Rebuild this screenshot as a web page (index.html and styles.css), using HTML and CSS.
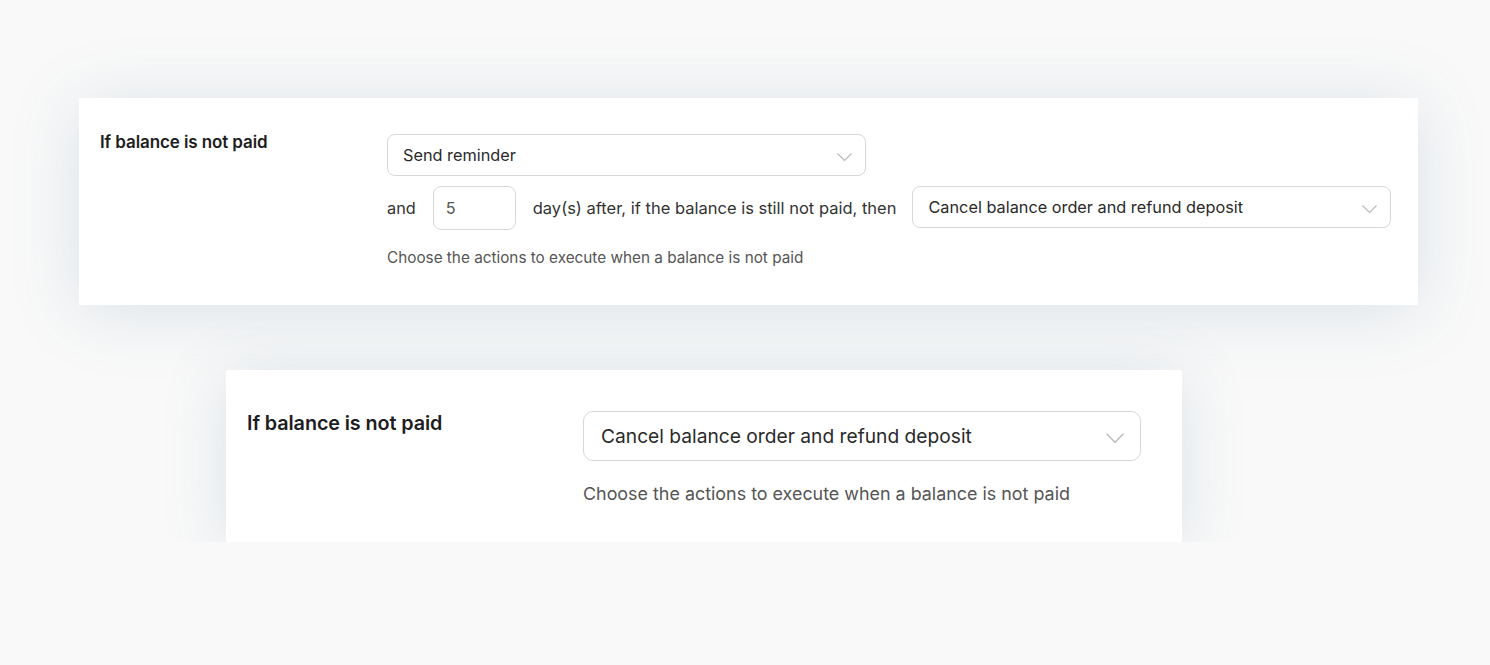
FILE: index.html
```html
<!DOCTYPE html>
<html lang="en">
<head>
    <meta charset="UTF-8">
    <meta name="viewport" content="width=device-width, initial-scale=1.0">
    <title>Balance settings</title>
    <link rel="stylesheet" href="styles.css">
</head>
<body>
    <div class="card card-wide">
        <div class="field-label">If balance is not paid</div>
        <div class="field-body">
            <div class="select select-first">
                <span>Send reminder</span>
                <svg class="chevron" viewBox="0 0 16 10"><path d="M1 1.5 L8 8.5 L15 1.5"/></svg>
            </div>
            <div class="inline-row">
                <span>and</span>
                <div class="number-box">5</div>
                <span class="row-text">day(s) after, if the balance is still not paid, then</span>
                <div class="select">
                    <span>Cancel balance order and refund deposit</span>
                    <svg class="chevron" viewBox="0 0 16 10"><path d="M1 1.5 L8 8.5 L15 1.5"/></svg>
                </div>
            </div>
            <p class="help">Choose the actions to execute when a balance is not paid</p>
        </div>
    </div>

    <div class="card card-large">
        <div class="field-label">If balance is not paid</div>
        <div class="field-body">
            <div class="select">
                <span>Cancel balance order and refund deposit</span>
                <svg class="chevron" viewBox="0 0 16 10"><path d="M1 1.5 L8 8.5 L15 1.5"/></svg>
            </div>
            <p class="help">Choose the actions to execute when a balance is not paid</p>
        </div>
    </div>
</body>
</html>
```

FILE: styles.css
```css
body {
    font-family: Inter, "Noto Sans", sans-serif;
    background-color: #f9f9f9;
    color: #1d1d1f;
    margin: 0;
    padding: 98px 0 0 79px;
}
.card {
    background-color: #fff;
    display: grid;
    box-shadow: 0 6px 64px rgba(70, 115, 150, 0.17);
    box-sizing: border-box;
}
.card-wide {
    width: 1339px;
    height: 207px;
    grid-template-columns: 287px 1fr;
    padding: 36px 28px 0 21px;
    font-size: 16.3px;
}
.card-large {
    width: 956px;
    height: 172px;
    margin: 65px 0 0 147px;
    grid-template-columns: 336px 1fr;
    padding: 41px 41px 0 21px;
    font-size: 19px;
}
.field-label {
    font-weight: 600;
    letter-spacing: -0.1px;
}
.card-wide .field-label {
    font-size: 17px;
    line-height: 17px;
}
.card-large .field-label {
    font-size: 19.8px;
    line-height: 24px;
}
.field-body {
    display: flex;
    flex-direction: column;
}
.select {
    display: flex;
    align-items: center;
    justify-content: space-between;
    border: 1px solid #d8d8d8;
    border-radius: 8px;
    background-color: #fff;
    color: #2a2a2a;
    box-sizing: border-box;
    white-space: nowrap;
}
.card-wide .select {
    width: 479px;
    height: 42px;
    padding: 0 12px 0 15px;
}
.card-large .select {
    width: 558px;
    height: 50px;
    padding: 0 15px 0 17px;
    font-size: 19.2px;
    border-radius: 10px;
}
.chevron {
    fill: none;
    stroke: #b8b8b8;
    stroke-width: 1.1;
    width: 17px;
    height: 10px;
    margin-top: 4px;
}
.card-large .chevron {
    width: 20px;
    height: 12px;
}
.inline-row {
    display: flex;
    align-items: center;
    margin-top: 10px;
    color: #333;
    white-space: nowrap;
}
.row-text {
    font-size: 16.5px;
}
.number-box {
    width: 83px;
    height: 44px;
    margin: 0 17px;
    padding-left: 12px;
    display: flex;
    align-items: center;
    border: 1px solid #d8d8d8;
    border-radius: 8px;
    box-sizing: border-box;
    color: #555;
}
.inline-row .select {
    margin-left: 16px;
    margin-top: -2px;
}
.help {
    margin: 18px 0 0;
    color: #555;
    font-size: 15.3px;
}
.card-large .help {
    margin-top: 22px;
    font-size: 17.9px;
}
```
